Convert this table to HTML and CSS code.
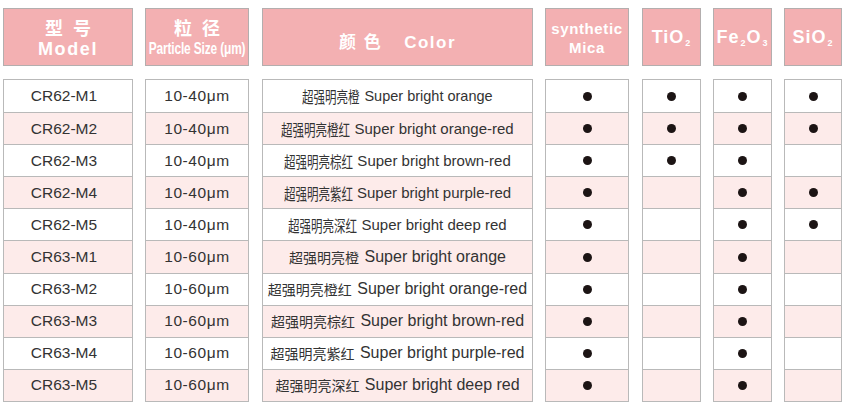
FILE: index.html
```html
<!DOCTYPE html>
<html lang="zh">
<head>
<meta charset="utf-8">
<link rel="stylesheet" href="styles.css">
</head>
<body>
<div class="table">
  <div class="col c1">
    <div class="head"><div class="zh">型 号</div><div class="en">Model</div></div>
    <div class="rows model">
      <div class="cell">CR62-M1</div><div class="cell">CR62-M2</div><div class="cell">CR62-M3</div><div class="cell">CR62-M4</div><div class="cell">CR62-M5</div>
      <div class="cell">CR63-M1</div><div class="cell">CR63-M2</div><div class="cell">CR63-M3</div><div class="cell">CR63-M4</div><div class="cell">CR63-M5</div>
    </div>
  </div>
  <div class="col c2">
    <div class="head"><div class="zh">粒 径</div><div class="narrow">Particle Size (μm)</div></div>
    <div class="rows size">
      <div class="cell">10-40μm</div><div class="cell">10-40μm</div><div class="cell">10-40μm</div><div class="cell">10-40μm</div><div class="cell">10-40μm</div>
      <div class="cell">10-60μm</div><div class="cell">10-60μm</div><div class="cell">10-60μm</div><div class="cell">10-60μm</div><div class="cell">10-60μm</div>
    </div>
  </div>
  <div class="col c3">
    <div class="head"><div class="color-title">颜 色<span class="gap"></span>Color</div></div>
    <div class="rows color">
      <div class="cell small first"><span class="cn z5">超强明亮橙</span> Super bright orange</div>
      <div class="cell small"><span class="cn z6">超强明亮橙红</span> Super bright orange-red</div>
      <div class="cell small"><span class="cn z6">超强明亮棕红</span> Super bright brown-red</div>
      <div class="cell small"><span class="cn z6">超强明亮紫红</span> Super bright purple-red</div>
      <div class="cell small"><span class="cn z6">超强明亮深红</span> Super bright deep red</div>
      <div class="cell"><span class="cn">超强明亮橙</span> Super bright orange</div>
      <div class="cell"><span class="cn">超强明亮橙红</span> Super bright orange-red</div>
      <div class="cell"><span class="cn">超强明亮棕红</span> Super bright brown-red</div>
      <div class="cell"><span class="cn">超强明亮紫红</span> Super bright purple-red</div>
      <div class="cell"><span class="cn">超强明亮深红</span> Super bright deep red</div>
    </div>
  </div>
  <div class="col c4">
    <div class="head"><div class="mica">synthetic<br>Mica</div></div>
    <div class="rows">
      <div class="cell"><i class="dot"></i></div><div class="cell"><i class="dot"></i></div><div class="cell"><i class="dot"></i></div><div class="cell"><i class="dot"></i></div><div class="cell"><i class="dot"></i></div>
      <div class="cell"><i class="dot"></i></div><div class="cell"><i class="dot"></i></div><div class="cell"><i class="dot"></i></div><div class="cell"><i class="dot"></i></div><div class="cell"><i class="dot"></i></div>
    </div>
  </div>
  <div class="col c5">
    <div class="head"><div class="chem">TiO<sub>2</sub></div></div>
    <div class="rows">
      <div class="cell"><i class="dot"></i></div><div class="cell"><i class="dot"></i></div><div class="cell"><i class="dot"></i></div><div class="cell"></div><div class="cell"></div>
      <div class="cell"></div><div class="cell"></div><div class="cell"></div><div class="cell"></div><div class="cell"></div>
    </div>
  </div>
  <div class="col c6">
    <div class="head"><div class="chem">Fe<sub>2</sub>O<sub>3</sub></div></div>
    <div class="rows">
      <div class="cell"><i class="dot"></i></div><div class="cell"><i class="dot"></i></div><div class="cell"><i class="dot"></i></div><div class="cell"><i class="dot"></i></div><div class="cell"><i class="dot"></i></div>
      <div class="cell"><i class="dot"></i></div><div class="cell"><i class="dot"></i></div><div class="cell"><i class="dot"></i></div><div class="cell"><i class="dot"></i></div><div class="cell"><i class="dot"></i></div>
    </div>
  </div>
  <div class="col c7">
    <div class="head"><div class="chem">SiO<sub>2</sub></div></div>
    <div class="rows">
      <div class="cell"><i class="dot"></i></div><div class="cell"><i class="dot"></i></div><div class="cell"></div><div class="cell"><i class="dot"></i></div><div class="cell"><i class="dot"></i></div>
      <div class="cell"></div><div class="cell"></div><div class="cell"></div><div class="cell"></div><div class="cell"></div>
    </div>
  </div>
</div>
</body>
</html>
```
FILE: styles.css
```css
html, body {
  margin: 0;
  padding: 0;
  background: #ffffff;
}
body {
  font-family: "Liberation Sans", "Noto Sans CJK SC", sans-serif;
  color: #333333;
}
.table {
  display: flex;
  padding: 8px 0 0 3px;
}
.col {
  display: flex;
  flex-direction: column;
  gap: 13px;
  flex: none;
}
.c1 { width: 130px; margin-right: 12px; }
.c2 { width: 104px; margin-right: 13px; }
.c3 { width: 271px; margin-right: 12px; }
.c4 { width: 84px; margin-right: 13px; }
.c5 { width: 59px; margin-right: 12px; }
.c6 { width: 59px; margin-right: 12px; }
.c7 { width: 58px; }

.head {
  box-sizing: border-box;
  height: 58px;
  background: #f3b0b2;
  border: 1px solid #b3aeae;
  color: #ffffff;
  font-weight: bold;
  display: flex;
  flex-direction: column;
  align-items: center;
  justify-content: center;
  text-align: center;
}
.head .zh {
  font-family: "Noto Sans CJK SC", sans-serif;
  font-size: 18px;
  line-height: 21px;
  letter-spacing: 3px;
  margin-left: 3px;
  margin-top: 2px;
  font-weight: bold;
}
.head .en {
  font-size: 18px;
  line-height: 22px;
  letter-spacing: 1.6px;
}
.head .narrow {
  font-size: 17px;
  line-height: 22px;
  white-space: nowrap;
  transform: scaleX(0.7);
  letter-spacing: -0.2px;
}
.color-title {
  font-size: 17px;
  letter-spacing: 1.5px;
  margin-top: 6px;
}
.color-title .gap {
  display: inline-block;
  width: 22px;
}
.mica {
  font-size: 15px;
  line-height: 19px;
  letter-spacing: 0.6px;
  margin-top: 1px;
}
.chem {
  font-size: 18px;
  letter-spacing: 1px;
}
.chem sub {
  font-size: 9px;
  vertical-align: -3px;
  letter-spacing: 0;
  margin: 0 1px;
}

.rows {
  box-sizing: border-box;
  height: 323px;
  display: grid;
  grid-template-rows: repeat(10, 1fr);
  border: 1px solid #b9b9b9;
}
.cell {
  display: flex;
  align-items: center;
  justify-content: center;
  border-top: 1px solid #b9b9b9;
  white-space: nowrap;
  font-size: 15.5px;
}
.cell:first-child { border-top: none; }
.cell:nth-child(even) { background: #fdebea; }
.model .cell { padding-right: 8px; }
.size .cell { letter-spacing: 0.6px; }
.color .cell {
  font-size: 16px;
  white-space: pre;
}
.color .cell.small {
  font-size: 15px;
}
.color .cell.small.first {
  font-size: 14.5px;
}
.cn {
  font-family: "Noto Sans CJK SC", sans-serif;
  font-size: 14px;
  margin-right: 1px;
}
.small .cn {
  display: inline-block;
  font-size: 16px;
  transform: scaleX(0.72);
  transform-origin: left center;
}
.small .cn.z5 { margin-right: -22px; }
.small .cn.z6 { margin-right: -27px; }
.dot {
  display: block;
  width: 9px;
  height: 9px;
  border-radius: 50%;
  background: #1c1414;
}
```
